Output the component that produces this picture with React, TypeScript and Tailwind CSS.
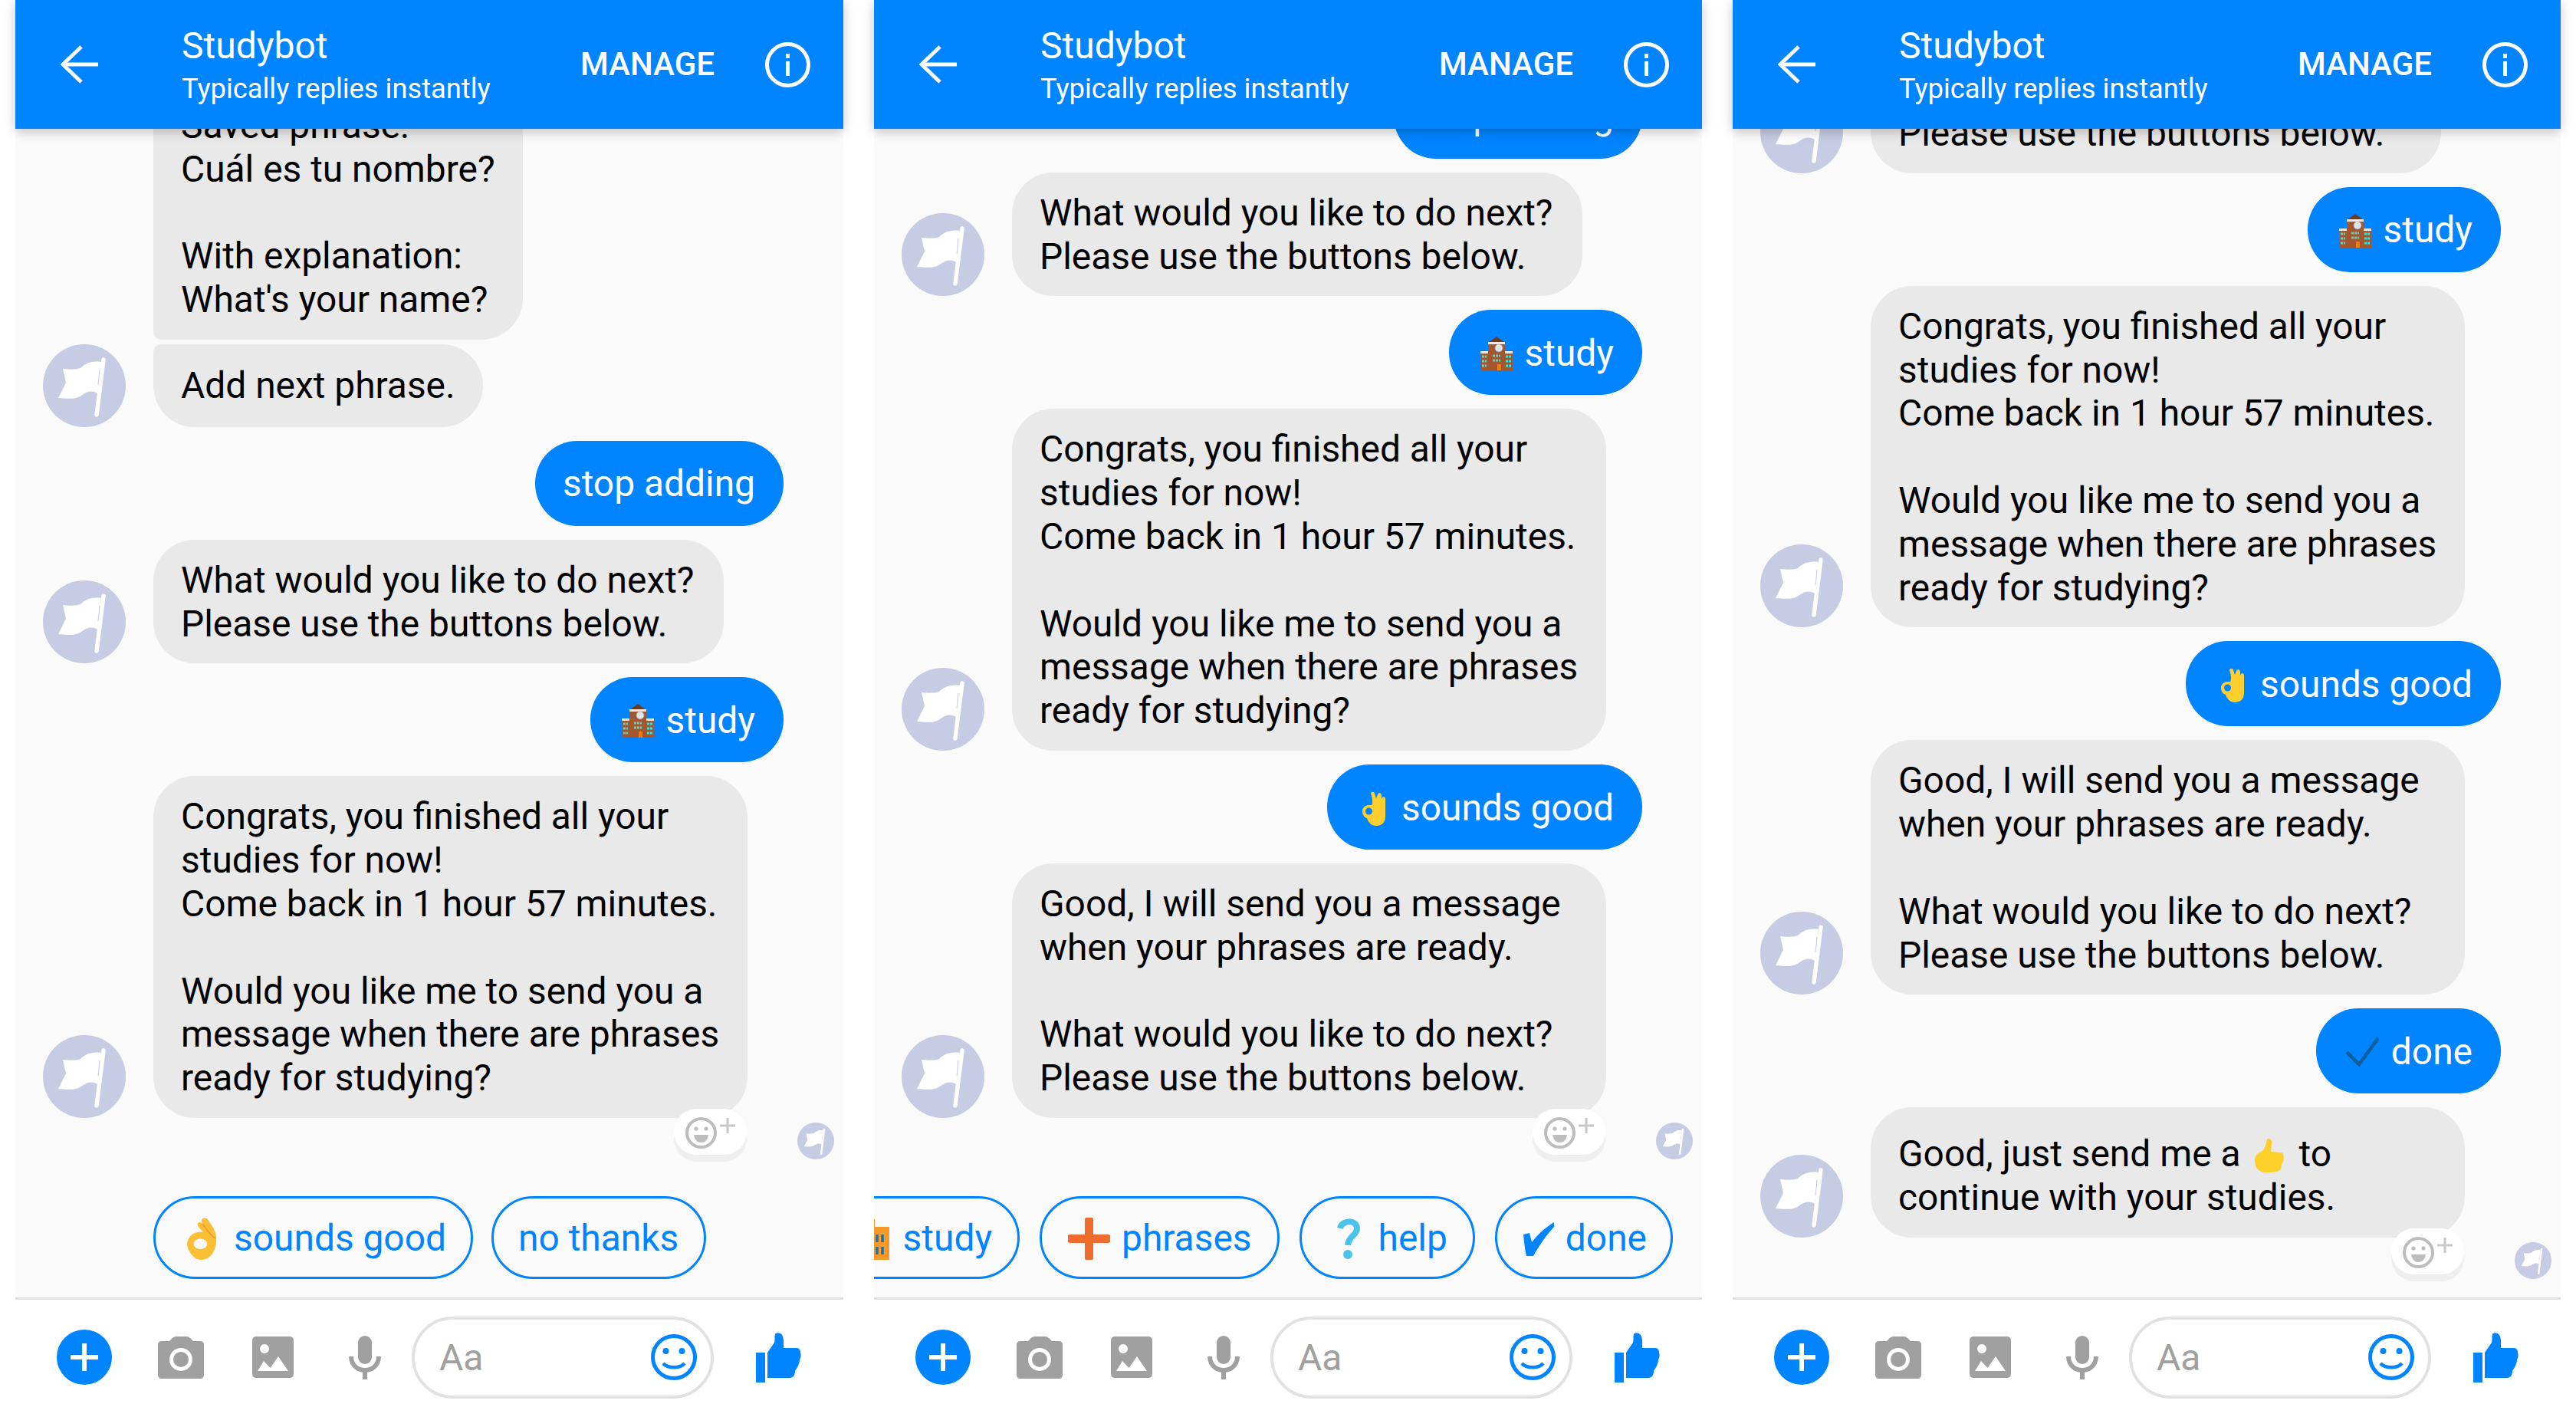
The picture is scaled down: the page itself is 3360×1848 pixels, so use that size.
import React from "react";

const Flag = ({ size }: { size: string }) => (
  <svg viewBox="0 0 108 108" className={size}>
    <circle cx="54" cy="54" r="54" fill="#c5cce3" />
    <path d="M26 32 C36 33 44 33 49 31 C54 26 62 21 76 23 L71 64 C64 60 58 61 50 67 C44 72 30 71 20 70 L30 50 Z" fill="#fff" />
    <path d="M79 20 L70 92" stroke="#fff" strokeWidth="5.5" strokeLinecap="round" />
    <path d="M74 33 L72 53" stroke="#c5cce3" strokeWidth="1" />
  </svg>
);

const QuickHand = () => (
  <svg viewBox="0 0 37 53" className="w-[40px] h-[55px] shrink-0">
    <path d="M19 2 C22 -1 26 1 28 5 C33 12 37 18 37 27 C37 41 30 53 18 53 C11 53 6 48 3 42 C0 37 -1 31 3 25 C6 20 12 18 17 18 L20 18 L15 12 C12 8 14 5 17 6 L20 8 C18 6 18 4 19 2 Z" fill="#fbbf35" />
    <ellipse cx="17" cy="33" rx="8.500" ry="6.500" fill="#fafafa" />
    <path d="M20 8 L28 19 L35 26" stroke="#e5962a" strokeWidth="1.300" fill="none" />
  </svg>
);

const BlueHand = () => (
  <svg viewBox="0 0 31 45" className="w-[31px] h-[45px] shrink-0">
    <path d="M11 3 C12 0 15 0 16 3 L18 9 L20 4 C21 1 25 2 25 5 L25 10 C26 6 30 6 30 10 L30 32 C30 40 26 45 18 45 C12 45 8 41 6 35 C2 34 0 30 0 26 C0 21 4 18 9 18 L12 18 C14 15 13 8 11 3 Z" fill="#fdcf2e" />
    <circle cx="8.500" cy="26" r="4.500" fill="#0084ff" />
  </svg>
);

const School = () => (
  <svg viewBox="0 0 42 44" className="w-[42px] h-[44px] shrink-0">
    <rect x="0" y="20" width="42" height="24" fill="#a5562f" />
    <rect x="0" y="19" width="12" height="3" fill="#f3e9e0" />
    <rect x="30" y="19" width="12" height="3" fill="#f3e9e0" />
    <rect x="10" y="8" width="22" height="36" fill="#a5562f" />
    <path d="M21 0 L10 8 H32 Z" fill="#6e3a1c" />
    <rect x="10" y="7" width="22" height="3" fill="#f3e9e0" />
    <circle cx="24" cy="15" r="5" fill="#dfe6ea" stroke="#88aaaa" strokeWidth="0.6" />
    <path d="M2 26 h6 M2 32 h6 M2 38 h6 M16 25 h10 M16 31 h10 M33 26 h7 M33 32 h7 M33 38 h7" stroke="#3ce0d8" strokeWidth="3" strokeDasharray="3 1" />
    <rect x="22" y="36" width="5" height="8" fill="#f57c00" />
  </svg>
);

const SchoolOrange = () => (
  <svg viewBox="0 0 55 55" className="w-[55px] h-[55px] shrink-0">
    <rect x="0" y="2" width="33" height="53" fill="#f89a2a" />
    <rect x="0" y="12" width="52" height="43" fill="#f89a2a" />
    <path d="M36 22 V32 M43 22 V32 M36 38 V48 M43 38 V48" stroke="#1d6fa5" strokeWidth="3.500" />
  </svg>
);

const OrangePlus = () => (
  <svg viewBox="0 0 55 55" className="w-[55px] h-[55px] shrink-0">
    <path d="M27.5 3 V52 M3 27.5 H52" stroke="#ef6c2f" strokeWidth="11" strokeLinecap="round" />
  </svg>
);

const Question = () => (
  <svg viewBox="0 0 32 55" className="w-[32px] h-[55px] shrink-0">
    <path d="M5 14 C7 3 27 2 27 14 C27 23 16 24 15 36" stroke="#4dc3ea" strokeWidth="8" fill="none" />
    <circle cx="15" cy="48" r="6" fill="#4dc3ea" />
  </svg>
);

const HeavyCheck = () => (
  <svg viewBox="0 0 41 44" className="w-[41px] h-[44px] shrink-0">
    <path d="M1 16 L9 14 L12 26 C19 17 28 8 41 0 L41 6 C30 18 22 30 14 44 L5 44 C3 36 2 26 1 16 Z" fill="#0084ff" />
  </svg>
);

const DarkCheck = () => (
  <svg viewBox="0 0 43 40" className="w-[43px] h-[40px] shrink-0">
    <path d="M1 20 L17 36 L42 2" stroke="#0d5f9f" strokeWidth="4.5" fill="none" />
  </svg>
);

const YellowThumb = () => (
  <svg viewBox="0 0 38 44" className="w-[38px] h-[44px] inline-block align-[-8px] mx-[19px]">
    <path d="M18 0 C21 0 23 3 22 7 L21 17 L34 18 C37 18 38 21 37.5 24 C38 28 37 31 35 33 C35 37 34 41 31 42 C27 44 20 44 14 44 C6 44 0 38 0 29 C0 23 3 19 8 17 C12 15 13 12 15 5 C15.500 2 16 0 18 0 Z" fill="#fdd02a" />
  </svg>
);

type Item =
  | { kind: "bot"; text?: string; node?: React.ReactNode; avatar?: boolean; grouped?: "top" | "bottom"; width?: string }
  | { kind: "me"; text: string; icon?: React.ReactNode; pad: string };

const Reaction = () => (
  <div className="absolute top-full mt-[-12px] right-[1px] w-[95px] h-[60px] rounded-full bg-white shadow-[0_9px_0_#efefef] pl-[15px] pt-[11px]">
    <svg viewBox="0 0 66 41" className="w-[66px] h-[41px]">
      <circle cx="20.5" cy="20.5" r="18.5" fill="none" stroke="#bdbdbd" strokeWidth="4" />
      <circle cx="14" cy="15" r="2.6" fill="#bdbdbd" />
      <circle cx="27" cy="15" r="2.6" fill="#bdbdbd" />
      <path d="M11 23 H30 C29 30 25 33 20.5 33 C16 33 12 30 11 23 Z" fill="#bdbdbd" />
      <path d="M55 1 V21 M45 11 H65" stroke="#c8c8c8" strokeWidth="3" />
    </svg>
  </div>
);

const Bot = ({ item, last }: { item: Extract<Item, { kind: "bot" }>; last: boolean }) => {
  const corner =
    item.grouped === "top"
      ? "rounded-tl-[54px] rounded-tr-[54px] rounded-br-[54px] rounded-bl-[10px]"
      : item.grouped === "bottom"
        ? "rounded-tl-[10px] rounded-tr-[54px] rounded-br-[54px] rounded-bl-[54px]"
        : "rounded-[54px]";
  return (
    <div className={`relative flex items-end shrink-0 pl-[36px] ${item.grouped === "bottom" ? "mt-[6px]" : "mt-[18px]"}`}>
      {item.avatar === false ? (
        <div className="w-[108px] shrink-0" />
      ) : (
        <Flag size="w-[108px] h-[108px] shrink-0" />
      )}
      <div className="relative ml-[36px]">
        <div className={`bg-[#e9e9e9] ${corner} px-[36px] pt-[25px] pb-[23px] min-h-[108px] flex flex-col justify-center text-black whitespace-pre-line ${item.width ?? ""}`}>
          {item.node ?? item.text}
        </div>
        {last && <Reaction />}
      </div>
      {last && (
        <div className="absolute top-full right-[12px] mt-[6px]">
          <Flag size="w-[48px] h-[48px]" />
        </div>
      )}
    </div>
  );
};

const Me = ({ item }: { item: Extract<Item, { kind: "me" }> }) => (
  <div className="flex justify-end shrink-0 pr-[78px] mt-[18px]">
    <div className={`h-[111px] rounded-[55px] bg-[#0084ff] text-white flex items-center pr-[37px] pt-[3px] ${item.pad}`}>
      {item.icon}
      {item.text}
    </div>
  </div>
);

const Quick = ({ icon, text, pad, gap, end }: { icon?: React.ReactNode; text: string; pad: string; gap: string; end: string }) => (
  <div className={`h-[108px] shrink-0 rounded-[54px] border-[3.5px] border-[#0084ff] text-[#0084ff] flex items-center pt-[3px] ${pad} ${end}`}>
    {icon}
    <span className={gap}>{text}</span>
  </div>
);

const Header = () => (
  <div className="relative z-10 h-[168px] shrink-0 bg-[#0084ff] shadow-[0_4px_14px_rgba(0,0,0,0.22)] flex items-center text-white">
    <svg viewBox="0 0 50 50" className="ml-[59px] w-[50px] h-[50px] shrink-0">
      <path d="M49 25 H3 M27 2 L3 25 L27 48" stroke="#fff" strokeWidth="5" fill="none" />
    </svg>
    <div className="ml-[108px] flex flex-col">
      <div className="text-[48px] leading-[56px] mt-[4px]">Studybot</div>
      <div className="text-[36.300px] leading-[50px] mt-[3px]">Typically replies instantly</div>
    </div>
    <div className="ml-auto text-[42px] font-medium pt-[1px]">MANAGE</div>
    <svg viewBox="0 0 59 59" className="ml-[66px] mr-[43px] w-[59px] h-[59px] shrink-0">
      <circle cx="29.5" cy="29.5" r="27" fill="none" stroke="#fff" strokeWidth="5" />
      <rect x="27" y="15" width="5" height="6" fill="#fff" />
      <rect x="27" y="25" width="5" height="19" fill="#fff" />
    </svg>
  </div>
);

const Composer = () => (
  <div className="h-[156px] shrink-0 bg-white border-t-[3px] border-[#e2e2e2] flex items-center pb-[3px]">
    <svg viewBox="0 0 72 72" className="ml-[54px] w-[72px] h-[72px] shrink-0">
      <circle cx="36" cy="36" r="36" fill="#0084ff" />
      <path d="M36 18 V54 M18 36 H54" stroke="#fff" strokeWidth="6" />
    </svg>
    <svg viewBox="0 0 60 55" className="ml-[60px] w-[60px] h-[55px] shrink-0">
      <path d="M5 6 H15 L19 2 Q21 0 24 0 H37 Q40 0 42 2 L46 6 H55 Q60 6 60 11 V50 Q60 55 55 55 H5 Q0 55 0 50 V11 Q0 6 5 6 Z" fill="#a0a0a0" />
      <circle cx="30" cy="30" r="15" fill="#fff" />
      <circle cx="30" cy="30" r="10" fill="#a0a0a0" />
    </svg>
    <svg viewBox="0 0 54 54" className="ml-[63px] w-[54px] h-[54px] shrink-0">
      <rect width="54" height="54" rx="5" fill="#a0a0a0" />
      <circle cx="16" cy="16" r="6" fill="#fff" />
      <path d="M7 45 L15 32 L23.500 41 L34 26 L47 45 Z" fill="#fff" />
    </svg>
    <svg viewBox="0 0 42 57" className="ml-[72px] w-[42px] h-[57px] shrink-0">
      <rect x="12" y="0" width="18" height="37" rx="9" fill="#a0a0a0" />
      <path d="M3 27 C3 38 11 45 21 45 C31 45 39 38 39 27" stroke="#a0a0a0" strokeWidth="6" fill="none" />
      <path d="M21 45 V57" stroke="#a0a0a0" strokeWidth="6" />
    </svg>
    <div className="ml-[40px] w-[394px] h-[107px] rounded-[54px] border-[4px] border-[#e2e2e2] bg-white flex items-center pl-[32px] pr-[18px]">
      <span className="text-[48px] text-[#a0a0a0] pt-[3px]">Aa</span>
      <svg viewBox="0 0 60 60" className="ml-auto w-[60px] h-[60px] shrink-0">
        <circle cx="30" cy="30" r="27.500" fill="none" stroke="#0084ff" strokeWidth="5" />
        <circle cx="19.500" cy="22" r="4" fill="#0084ff" />
        <circle cx="40.500" cy="22" r="4" fill="#0084ff" />
        <path d="M16 38 C22 45 38 45 44 38" stroke="#0084ff" strokeWidth="4.500" fill="none" />
      </svg>
    </div>
    <svg viewBox="0 0 59 65" className="ml-[55px] w-[59px] h-[65px] shrink-0">
      <rect x="0" y="26" width="12" height="39" fill="#0084ff" />
      <path d="M15 26 L24 13 C25 9 24 4 25 2 C27 -1 32 0 34 3 C37 8 36 15 36 20 L53 20 C57 20 58 23 58 26 C59 29 59 32 57 35 C57 38 56 41 55 43 C54 46 52 48 51 50 C51 55 49 59 44 59 L15 59 Z" fill="#0084ff" />
    </svg>
  </div>
);

const Phone = ({ items, quick }: { items: Item[]; quick?: React.ReactNode }) => (
  <div className="w-[1080px] h-[1848px] flex flex-col shrink-0">
    <Header />
    <div className="flex-1 min-h-0 flex flex-col justify-end overflow-hidden bg-[#fafafa]">
      {items.map((it, i) =>
        it.kind === "bot" ? (
          <Bot key={i} item={it} last={i === items.length - 1} />
        ) : (
          <Me key={i} item={it} />
        ),
      )}
      {quick ?? <div className="h-[78px] shrink-0" />}
    </div>
    <Composer />
  </div>
);

const whatNext = "What would you like to do next?\nPlease use the buttons below.";
const congrats =
  "Congrats, you finished all your\nstudies for now!\nCome back in 1 hour 57 minutes.\n\nWould you like me to send you a\nmessage when there are phrases\nready for studying?";
const good =
  "Good, I will send you a message\nwhen your phrases are ready.\n\nWhat would you like to do next?\nPlease use the buttons below.";

const meStudy: Item = { kind: "me", text: "study", pad: "pl-[41px]", icon: <span className="mr-[16px] flex"><School /></span> };
const meGood: Item = {
  kind: "me",
  text: "sounds good",
  pad: "pl-[46px]",
  icon: <span className="mr-[20px] flex"><BlueHand /></span>,
};
const meDone: Item = { kind: "me", text: "done", pad: "pl-[39px]", icon: <span className="mr-[16px] flex"><DarkCheck /></span> };
const meStop: Item = { kind: "me", text: "stop adding", pad: "pl-[36px]" };
const botNext: Item = { kind: "bot", text: whatNext, width: "w-[744px]" };
const botCongrats: Item = { kind: "bot", text: congrats, width: "w-[775px]" };
const botGood: Item = { kind: "bot", text: good, width: "w-[775px]" };

export default function App() {
  return (
    <div className="w-[3360px] h-[1848px] bg-white flex gap-[40px] px-[20px] overflow-hidden font-['Roboto',sans-serif] text-[47.9px] leading-[56.8px]">
      <Phone
        items={[
          { kind: "bot", avatar: false, grouped: "top", text: "Saved phrase:\nCuál es tu nombre?\n\nWith explanation:\nWhat's your name?" },
          { kind: "bot", grouped: "bottom", text: "Add next phrase." },
          meStop,
          botNext,
          meStudy,
          botCongrats,
        ]}
        quick={
          <div className="flex shrink-0 gap-[24px] pl-[180px] mt-[102px] mb-[24px]">
            <Quick pad="pl-[40px]" end="pr-[32px]" gap="ml-[22px]" text="sounds good" icon={<QuickHand />} />
            <Quick pad="pl-[32px]" end="pr-[33px]" gap="" text="no thanks" />
          </div>
        }
      />
      <Phone
        items={[meStop, botNext, meStudy, botCongrats, meGood, botGood]}
        quick={
          <div className="flex shrink-0 justify-end gap-[26px] pr-[38px] mt-[102px] mb-[24px]">
            <Quick pad="pl-[36px]" end="pr-[33px]" gap="ml-[15px]" text="study" icon={<SchoolOrange />} />
            <Quick pad="pl-[34px]" end="pr-[33px]" gap="ml-[15px]" text="phrases" icon={<OrangePlus />} />
            <Quick pad="pl-[45px]" end="pr-[33px]" gap="ml-[23px]" text="help" icon={<Question />} />
            <Quick pad="pl-[33px]" end="pr-[31px]" gap="ml-[15px]" text="done" icon={<HeavyCheck />} />
          </div>
        }
      />
      <Phone
        items={[
          botNext,
          meStudy,
          botCongrats,
          meGood,
          botGood,
          meDone,
          {
            kind: "bot",
            node: (
              <>
                <div className="pt-[8px]">
                  Good, just send me a<YellowThumb />to
                </div>
                <div>continue with your studies.</div>
              </>
            ),
            width: "w-[775px]",
          },
        ]}
      />
    </div>
  );
}
